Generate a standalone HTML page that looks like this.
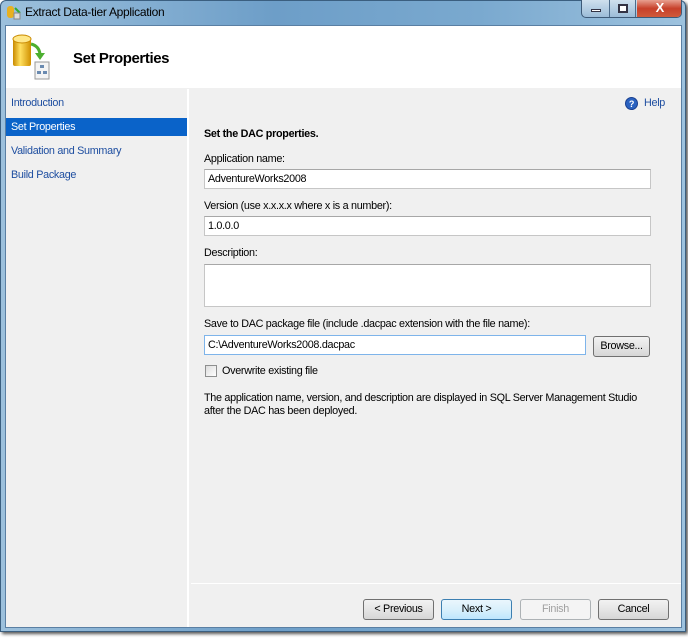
<!DOCTYPE html>
<html><head><style>
*{margin:0;padding:0;box-sizing:border-box}
body{width:688px;height:640px;background:#fff;position:relative;overflow:hidden;font-family:"Liberation Sans",sans-serif;font-size:11px;color:#000}
.frame{position:absolute;left:0;top:0;width:686px;height:632px;background:linear-gradient(90deg,#9cc0dc 0%,#6d9ec8 40%,#7aa9cf 70%,#9dc2de 100%);border:1px solid #3b5f80;border-radius:6px 6px 0 0;box-shadow:2px 2px 3px #555}
.title{position:absolute;left:24px;top:4px;font-size:12px;color:#000;letter-spacing:-0.3px}
.client{position:absolute;left:4px;top:24px;width:677px;height:603px;background:#f0f0f0;border:1px solid #5a7fa3;letter-spacing:-0.3px;font-size:10.8px}
.hdr{position:absolute;left:0;top:0;width:675px;height:62px;background:#fff}
.nav{position:absolute;left:0;top:63px;width:183px;height:538px;background:#f0f0f0;border-right:2px solid #fff}
.nav div{height:24px;line-height:24px;padding-left:5px;color:#1e4ea0}
.nav .sel{background:#0a63c9;color:#fff;height:18px;line-height:18px;margin:3px 0}
.lbl{position:absolute}
.inp{position:absolute;background:#fff;border:1px solid #c6c6c6;border-top-color:#a7a7a7;height:20px;line-height:18px;padding-left:3px}
.btn{position:absolute;height:21px;border:1px solid #707070;border-radius:3px;background:linear-gradient(#f2f2f2,#e5e5e5 50%,#d6d6d6);text-align:center;line-height:19px}
</style></head><body>
<div class="frame">
<svg style="position:absolute;left:5px;top:3px" width="16" height="16"><rect x="1" y="2" width="7" height="12" rx="3" fill="#e8b020"/><path d="M9 4 L14 9" stroke="#3a3" stroke-width="2"/><rect x="8" y="9" width="6" height="6" fill="#ddd" stroke="#888"/></svg>
<div class="title">Extract Data-tier Application</div>
<div style="position:absolute;left:580px;top:-1px;width:101px;height:18px;border:1px solid #3d5a78;border-top:none;border-radius:0 0 5px 5px;overflow:hidden;background:linear-gradient(#cfe0ee,#9bbcd8)">
<div style="position:absolute;left:0;top:0;width:28px;height:17px;border-right:1px solid #4c6c8c"><div style="position:absolute;left:9px;top:9px;width:10px;height:3px;background:#fff;border:1px solid #334"></div></div>
<div style="position:absolute;left:28px;top:0;width:26px;height:17px;border-right:1px solid #4c6c8c"><div style="position:absolute;left:8px;top:4px;width:10px;height:9px;border:2px solid #334;background:#fff"></div></div>
<div style="position:absolute;left:55px;top:0;width:46px;height:17px;background:linear-gradient(#e8a090,#c7402a 50%,#d05a3a);color:#fff;font-weight:bold;font-size:13px;text-align:center;line-height:16px">X</div>
</div>
<div class="client">
<div class="hdr">
<svg style="position:absolute;left:5px;top:8px" width="40" height="46"><defs><linearGradient id="g" x1="0" x2="1"><stop offset="0" stop-color="#c98a00"/><stop offset=".4" stop-color="#ffe060"/><stop offset="1" stop-color="#d09000"/></linearGradient></defs><rect x="2" y="4" width="18" height="28" rx="2" fill="url(#g)"/><ellipse cx="11" cy="5" rx="9" ry="4" fill="#ffe88a" stroke="#c98a00"/><path d="M20 10 Q28 12 29 20" stroke="#4caf30" stroke-width="3" fill="none"/><path d="M24 19 L34 19 L29 26Z" fill="#4caf30"/><rect x="24" y="28" width="14" height="17" fill="#f4f4f4" stroke="#999"/><rect x="29" y="31" width="4" height="3" fill="#6a8ab0"/><rect x="26" y="37" width="4" height="3" fill="#6a8ab0"/><rect x="32" y="37" width="4" height="3" fill="#6a8ab0"/></svg>
<div style="position:absolute;left:67px;top:24px;font-size:15px;font-weight:bold;letter-spacing:-0.4px">Set Properties</div>
</div>
<div class="nav">
<div style="margin-top:2px">Introduction</div>
<div class="sel">Set Properties</div>
<div>Validation and Summary</div>
<div>Build Package</div>
</div>
<svg style="position:absolute;left:619px;top:71px" width="13" height="13"><circle cx="6.5" cy="6.5" r="6" fill="#2a62c0" stroke="#1a4090"/><text x="6.5" y="10" font-size="9" font-weight="bold" fill="#fff" text-anchor="middle" font-family="Liberation Sans">?</text></svg>
<div class="lbl" style="left:638px;top:71px;color:#1e4ea0">Help</div>
<div class="lbl" style="left:198px;top:102px;font-weight:bold">Set the DAC properties.</div>
<div class="lbl" style="left:198px;top:127px">Application name:</div>
<div class="inp" style="left:198px;top:143px;width:447px">AdventureWorks2008</div>
<div class="lbl" style="left:198px;top:174px">Version (use x.x.x.x where x is a number):</div>
<div class="inp" style="left:198px;top:190px;width:447px">1.0.0.0</div>
<div class="lbl" style="left:198px;top:221px">Description:</div>
<div class="inp" style="left:198px;top:238px;width:447px;height:43px"></div>
<div class="lbl" style="left:198px;top:292px">Save to DAC package file (include .dacpac extension with the file name):</div>
<div class="inp" style="left:198px;top:309px;width:382px;border-color:#7eb4ea">C:\AdventureWorks2008.dacpac</div>
<div class="btn" style="left:587px;top:310px;width:57px">Browse...</div>
<div style="position:absolute;left:199px;top:339px;width:12px;height:12px;border:1px solid #8e8f8f;background:linear-gradient(135deg,#ddd,#fff)"></div>
<div class="lbl" style="left:216px;top:339px">Overwrite existing file</div>
<div class="lbl" style="left:198px;top:366px;line-height:13px">The application name, version, and description are displayed in SQL Server Management Studio<br>after the DAC has been deployed.</div>
<div style="position:absolute;left:185px;top:557px;width:490px;height:1px;background:#fff"></div>
<div class="btn" style="left:357px;top:573px;width:71px">&lt; Previous</div>
<div class="btn" style="left:435px;top:573px;width:71px;border-color:#3c7fb1;background:linear-gradient(#eaf6fd,#d9f0fc 50%,#bee6fd)">Next &gt;</div>
<div class="btn" style="left:514px;top:573px;width:71px;border-color:#adb2b5;background:#f4f4f4;color:#a0a0a0">Finish</div>
<div class="btn" style="left:592px;top:573px;width:71px">Cancel</div>
</div>
</div>
</body></html>
